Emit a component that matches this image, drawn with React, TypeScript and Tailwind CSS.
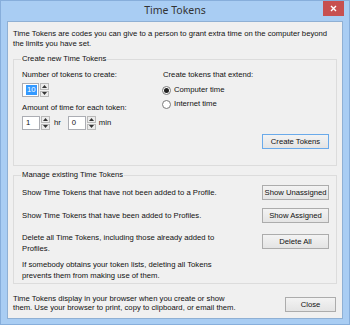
import React from "react";

function Spin({ value, selected, w }: { value: string; selected?: boolean; w: string }) {
  return (
    <div className="flex h-[14px] items-stretch">
      <div className={`${w} flex items-center border border-[#abadb3] bg-white pl-[3px]`}>
        {selected ? (
          <span className="bg-[#3399ff] px-[1px] leading-[10px] text-white">{value}</span>
        ) : (
          <span className="leading-[10px]">{value}</span>
        )}
      </div>
      <div className="ml-[1px] flex w-[9px] flex-col gap-[1px]">
        <div className="flex flex-1 items-center justify-center border border-[#b9b9b9] bg-[#ececec]">
          <svg width="5" height="3" viewBox="0 0 5 3"><path d="M2.5 0L5 3H0z" fill="#333" /></svg>
        </div>
        <div className="flex flex-1 items-center justify-center border border-[#b9b9b9] bg-[#ececec]">
          <svg width="5" height="3" viewBox="0 0 5 3"><path d="M0 0h5L2.5 3z" fill="#333" /></svg>
        </div>
      </div>
    </div>
  );
}

function Btn({ children, def, w = "w-[67px]" }: { children: React.ReactNode; def?: boolean; w?: string }) {
  return (
    <div
      className={`${w} flex h-[15px] shrink-0 items-center justify-center border ${
        def ? "border-[#6aaaea]" : "border-[#acacac]"
      } bg-gradient-to-b from-[#f3f3f3] to-[#e4e4e4] leading-[10px] text-[#111]`}
    >
      {children}
    </div>
  );
}

function Radio({ checked, label }: { checked?: boolean; label: string }) {
  return (
    <div className="ml-[-1px] flex h-[10px] items-center">
      <div className="flex h-[9px] w-[9px] items-center justify-center rounded-full border border-[#7a7a7a] bg-white">
        {checked && <div className="h-[5px] w-[5px] rounded-full bg-[#222]" />}
      </div>
      <span className="ml-[3px] leading-[10px]">{label}</span>
    </div>
  );
}

export default function App() {
  return (
    <div
      className="flex h-[325px] w-[350px] flex-col border border-[#87aedb] bg-[#a9cdf3] text-[7.7px] text-[#111]"
      style={{ fontFamily: '"Liberation Sans", Arial, sans-serif' }}
    >
      <div className="relative flex h-[20px] shrink-0 items-center justify-center">
        <span className="text-[10.5px] text-[#333]" style={{ fontFamily: '"Noto Sans", "Liberation Sans", sans-serif' }}>
          Time Tokens
        </span>
        <div className="absolute right-[5px] top-0 flex h-[15px] w-[21px] items-center justify-center bg-[#c75050]">
          <svg width="7" height="7" viewBox="0 0 7 7">
            <path d="M1 1L6 6M6 1L1 6" stroke="#fff" strokeWidth="1.4" />
          </svg>
        </div>
      </div>
      <div className="mx-[6px] flex h-[298px] flex-col border border-[#8fb0d4] bg-[#f0f0f0] px-[5px]">
        <p className="mt-[7px] leading-[10px]">
          Time Tokens are codes you can give to a person to grant extra time on the computer beyond
          <br />
          the limits you have set.
        </p>

        <fieldset className="mt-[5px] h-[112px] border border-[#dcdcdc] pl-[8px] pr-[7px]">
          <legend className="ml-[-1px] px-[1px] leading-[10px]">Create new Time Tokens</legend>
          <div className="flex">
            <div className="flex w-[141px] flex-col">
              <div className="mt-[6px] leading-[10px]">Number of tokens to create:</div>
              <div className="mt-[3px]">
                <Spin value="10" selected w="w-[17px]" />
              </div>
              <div className="mt-[6px] leading-[10px]">Amount of time for each token:</div>
              <div className="mt-[3px] flex items-center">
                <Spin value="1" w="w-[18px]" />
                <span className="ml-[4px] leading-[10px]">hr</span>
                <div className="ml-[7px]">
                  <Spin value="0" w="w-[18px]" />
                </div>
                <span className="ml-[3px] leading-[10px]">min</span>
              </div>
            </div>
            <div className="flex flex-1 flex-col">
              <div className="mt-[6px] leading-[10px]">Create tokens that extend:</div>
              <div className="mt-[5px]">
                <Radio checked label="Computer time" />
              </div>
              <div className="mt-[4px]">
                <Radio label="Internet time" />
              </div>
              <div className="mt-[25px] flex justify-end">
                <Btn def>Create Tokens</Btn>
              </div>
            </div>
          </div>
        </fieldset>

        <fieldset className="mt-[4px] h-[114px] border border-[#dcdcdc] pl-[8px] pr-[7px]">
          <legend className="ml-[-1px] px-[1px] leading-[10px]">Manage existing Time Tokens</legend>
          <div className="mt-[5px] flex items-center justify-between">
            <span className="leading-[10px]">Show Time Tokens that have not been added to a Profile.</span>
            <Btn>Show Unassigned</Btn>
          </div>
          <div className="mt-[8px] flex items-center justify-between">
            <span className="leading-[10px]">Show Time Tokens that have been added to Profiles.</span>
            <Btn>Show Assigned</Btn>
          </div>
          <div className="mt-[9px] flex items-start justify-between">
            <span className="leading-[11px]">
              Delete all Time Tokens, including those already added to
              <br />
              Profiles.
            </span>
            <div className="mt-[2px]">
              <Btn>Delete All</Btn>
            </div>
          </div>
          <div className="mt-[5px] leading-[11px]">
            If somebody obtains your token lists, deleting all Tokens
            <br />
            prevents them from making use of them.
          </div>
        </fieldset>

        <div className="mt-[10px] flex items-start justify-between pr-[1px]">
          <span className="leading-[9px]">
            Time Tokens display in your browser when you create or show
            <br />
            them. Use your browser to print, copy to clipboard, or email them.
          </span>
          <div className="mt-[3px]">
            <Btn w="w-[51px]">Close</Btn>
          </div>
        </div>
      </div>
    </div>
  );
}
